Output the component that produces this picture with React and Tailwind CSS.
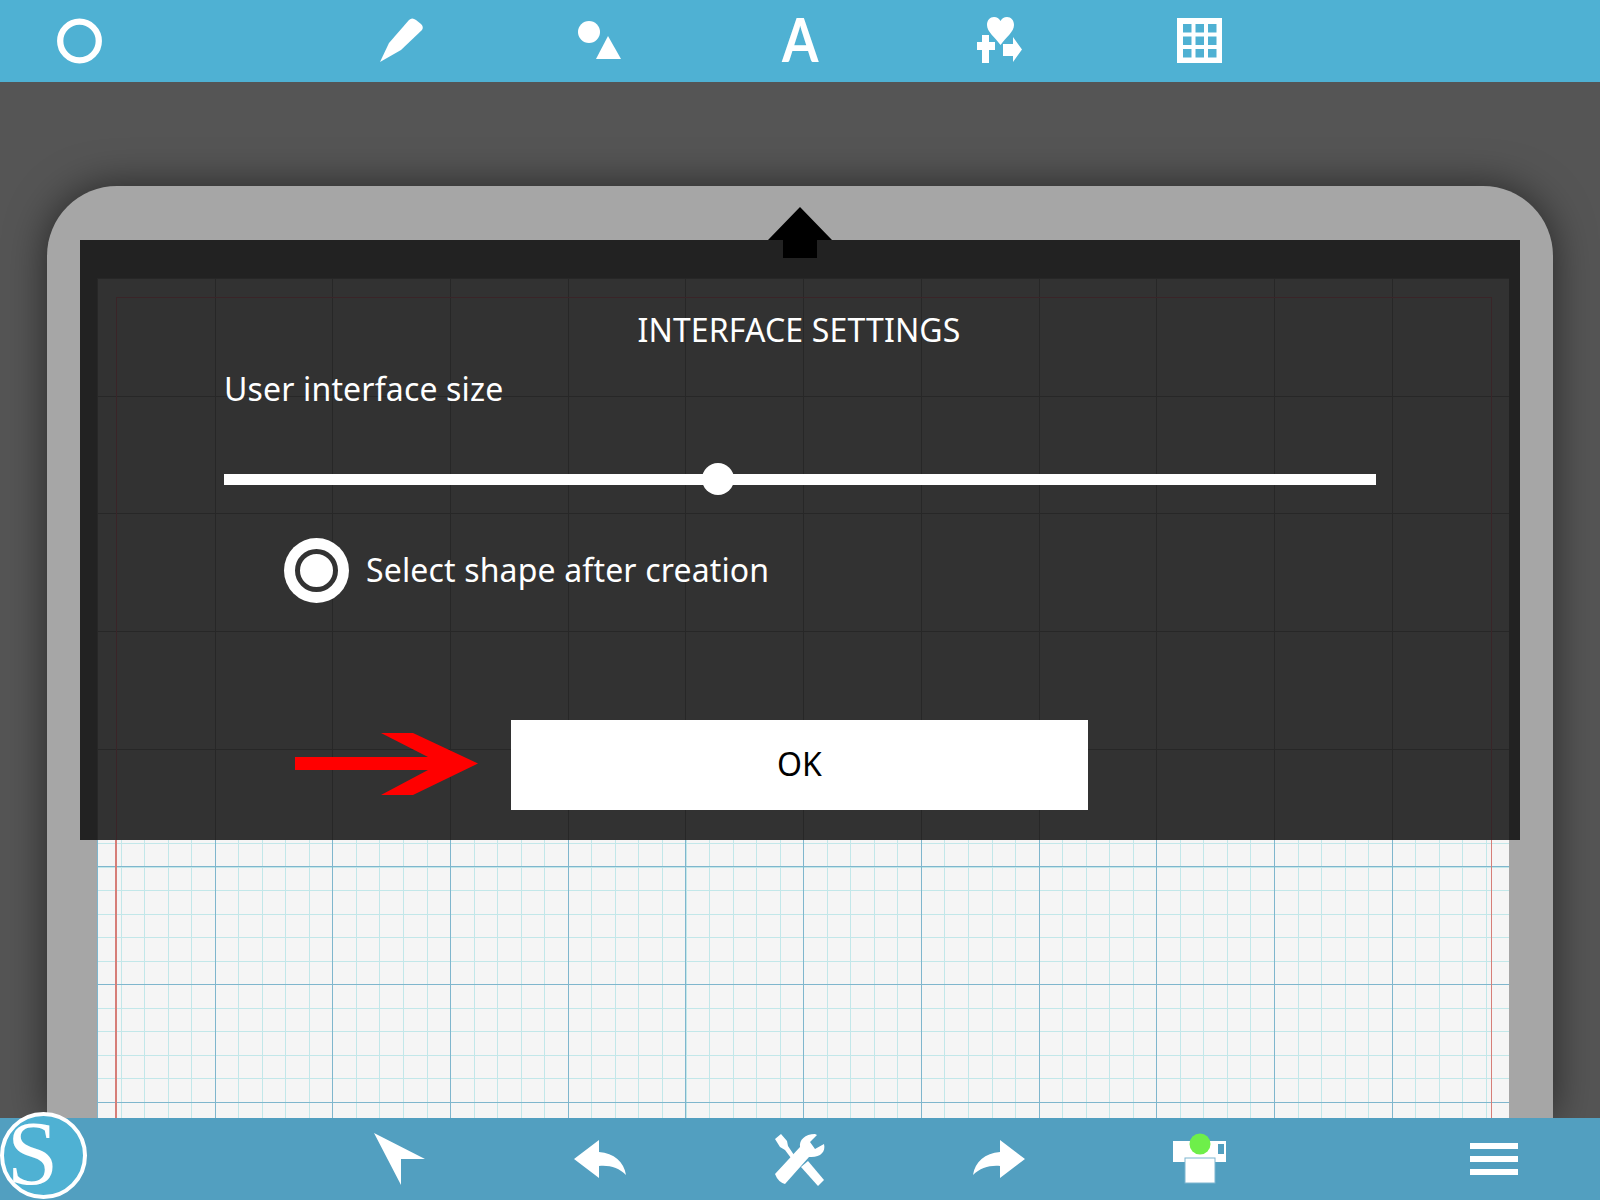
import React from 'react';

const paperGrid = 'bg-[repeating-linear-gradient(to_right,#7fb6cd_0,#7fb6cd_1px,transparent_1px,transparent_117.7px),repeating-linear-gradient(to_bottom,#7fb6cd_0,#7fb6cd_1px,transparent_1px,transparent_117.7px),repeating-linear-gradient(to_right,#c2e7e9_0,#c2e7e9_1px,transparent_1px,transparent_23.54px),repeating-linear-gradient(to_bottom,#c2e7e9_0,#c2e7e9_1px,transparent_1px,transparent_23.54px)]';
const dimGrid = 'bg-[repeating-linear-gradient(to_right,#272727_0,#272727_1px,transparent_1px,transparent_117.7px),repeating-linear-gradient(to_bottom,#272727_0,#272727_1px,transparent_1px,transparent_117.7px)]';

// viewBoxes below are in page pixels, so shapes line up with the screenshot
const TopIcon = ({ cx, children }) => (
    <svg width="60" height="60" viewBox={`${cx - 30} 11 60 60`} fill="#fff">
        {children}
    </svg>
);

const BottomIcon = ({ cx, children }) => (
    <svg width="64" height="64" viewBox={`${cx - 32} 1127 64 64`} fill="#fff">
        {children}
    </svg>
);

const Cell = ({ children }) => <div className="flex items-center justify-center">{children}</div>;

const TopBar = () => (
    <div className="relative z-10 grid h-[82px] shrink-0 grid-cols-[300px_repeat(5,200px)_300px] grid-rows-[82px] items-center bg-[#4fb1d3]">
        <div className="flex pl-[50px]">
            <TopIcon cx={80}>
                <circle cx="79.5" cy="41" r="19.3" fill="none" stroke="#fff" strokeWidth="6.3" />
            </TopIcon>
        </div>
        <Cell>
            <TopIcon cx={400}>
                <path d="M380 62 L389 43 L409 20 Q412 17 416 20 L421 24 Q424 27 422 30 L401 50 Z" />
            </TopIcon>
        </Cell>
        <Cell>
            <TopIcon cx={600}>
                <circle cx="589" cy="32" r="11" />
                <path d="M608 36 L621 59 L596 59 Z" />
            </TopIcon>
        </Cell>
        <Cell>
            <span className="mb-[5px] scale-x-[0.86] font-['Lato',sans-serif] text-[61px] leading-none font-bold text-white">A</span>
        </Cell>
        <Cell>
            <TopIcon cx={1000}>
                <path d="M1000.5 45 C995 37 987 32 987 25 C987 20 990 17 994 17 C997 17 999 18.5 1000.5 21 C1002 18.5 1004 17 1007 17 C1011 17 1014 20 1014 25 C1014 32 1006 37 1000.5 45 Z" />
                <path d="M982 35 H989 V42 H995 V50 H989 V63 H982 V50 H977 V42 H982 Z" />
                <path d="M1003 44 H1013 V37 L1022 49.5 L1013 62 V56 H1003 Z" />
            </TopIcon>
        </Cell>
        <Cell>
            <TopIcon cx={1200}>
                <path
                    fillRule="evenodd"
                    d="M1177 18 H1222 V63 H1177 Z M1183 24 V32.500 H1191.500 V24 Z M1195.500 24 V32.500 H1204 V24 Z M1208 24 V32.500 H1216.500 V24 Z M1183 36.500 V45 H1191.500 V36.500 Z M1195.500 36.500 V45 H1204 V36.500 Z M1208 36.500 V45 H1216.500 V36.500 Z M1183 49 V57.500 H1191.500 V49 Z M1195.500 49 V57.500 H1204 V49 Z M1208 49 V57.500 H1216.500 V49 Z"
                />
            </TopIcon>
        </Cell>
        <div />
    </div>
);

const BottomBar = () => (
    <div className="relative z-10 grid h-[82px] shrink-0 grid-cols-[300px_repeat(5,200px)_300px] grid-rows-[82px] items-center bg-[#529fc0]">
        <div className="mb-[1px] flex h-[87px] w-[87px] items-center justify-center self-end rounded-full border-[4px] border-white bg-[#4fb1d3] pr-[22px] pb-[6px]">
            <span className="font-['Liberation_Serif',serif] text-[92px] leading-[70px] text-white">S</span>
        </div>
        <Cell>
            <BottomIcon cx={400}>
                <path d="M374 1133 L425 1159 L401 1159 L401 1185 Z" />
            </BottomIcon>
        </Cell>
        <Cell>
            <BottomIcon cx={600}>
                <path d="M574 1159 L599 1140 V1152 C614 1153 624 1162 626 1175 C619 1168 610 1165 599 1166 V1178 Z" />
            </BottomIcon>
        </Cell>
        <Cell>
            <BottomIcon cx={800}>
                <path d="M775 1139 L781 1134 L787 1141 L788 1146 L794 1155 L791 1158 L785 1150 L780 1147 Z" />
                <path d="M801 1167 L808 1161 L824 1180 L818 1186 Z" />
                <path d="M775 1174 L800 1147 C799 1140 805 1134 815 1134 L817 1135 L810 1142 L815 1149 L824 1144 C826 1152 820 1158 809 1157 L785 1184 Q778 1182 775 1174 Z" />
            </BottomIcon>
        </Cell>
        <Cell>
            <BottomIcon cx={1000}>
                <path d="M1025 1159 L1000 1140 V1152 C985 1153 975 1162 973 1175 C980 1168 990 1165 1000 1166 V1178 Z" />
            </BottomIcon>
        </Cell>
        <Cell>
            <BottomIcon cx={1200}>
                <rect x="1173" y="1141" width="53" height="21" />
                <rect x="1185" y="1158" width="30" height="25" stroke="#7db5cf" />
                <rect x="1218" y="1144" width="6" height="10" fill="#529fc0" />
                <circle cx="1200" cy="1144" r="10.5" fill="#6eef4a" />
            </BottomIcon>
        </Cell>
        <div className="flex flex-col gap-[7px] justify-self-end pr-[82px]">
            <div className="h-[6px] w-[48px] bg-white" />
            <div className="h-[6px] w-[48px] bg-white" />
            <div className="h-[6px] w-[48px] bg-white" />
        </div>
    </div>
);

const SettingsPanel = () => (
    <div className="absolute top-[54px] right-[33px] left-[33px] flex h-[600px] bg-[#222] pt-[38px] pr-[11px] pl-[17px]">
        <svg className="absolute top-[-33px] left-[688px]" width="64" height="51" viewBox="768 207 64 51" fill="#000">
            <path d="M800 207 L832 240 H817 V258 H783 V240 H768 Z" />
        </svg>

        <div className={`relative flex flex-1 flex-col bg-[#323232] tracking-[0.15px] text-white ${dimGrid}`}>
            <div className="absolute top-[19px] right-[17px] bottom-0 left-[19px] border-x border-t border-[#3a2428]" />

            <div className="mt-[32px] h-[40px] pr-[8px] text-center text-[32px] leading-[40px]">INTERFACE SETTINGS</div>
            <div className="mt-[19px] h-[40px] pl-[127px] text-[32px] leading-[40px]">User interface size</div>

            <div className="relative mt-[54px] ml-[127px] flex h-[32px] w-[1152px] items-center">
                <div className="h-[11px] w-full bg-white" />
                <div className="absolute left-[478px] h-[32px] w-[32px] rounded-full bg-white" />
            </div>

            <div className="mt-[43px] ml-[187px] flex h-[65px] items-center gap-[17px]">
                <div className="flex h-[65px] w-[65px] items-center justify-center rounded-full bg-white">
                    <div className="h-[43px] w-[43px] rounded-full border-[5px] border-[#333] bg-white" />
                </div>
                <span className="pb-[2px] text-[32px] leading-[40px]">Select shape after creation</span>
            </div>

            <div className="mt-[117px] ml-[198px] flex items-center gap-[33px]">
                <svg className="mb-[2px]" width="183" height="62" viewBox="295 733 183 62" fill="#ff0000">
                    <path d="M295 757 H428 L381 733 H413 L478 763.5 L413 795 H381 L428 770 H295 Z" />
                </svg>
                <div className="flex h-[90px] w-[577px] items-center justify-center bg-white pb-[3px] text-[32px] text-black">OK</div>
            </div>
        </div>
    </div>
);

const App = () => {
    return (
        <div className="flex h-[1200px] w-[1600px] flex-col overflow-hidden bg-[#555] font-['Noto_Sans','Open_Sans',sans-serif]">
            <TopBar />
            <div className="flex min-h-0 flex-1 px-[47px] pt-[104px]">
                <div className="relative flex flex-1 rounded-t-[70px] bg-[#a6a6a6] pt-[92px] pr-[44px] pl-[50px] shadow-[0_0_40px_rgba(0,0,0,0.55)]">
                    <div className={`relative flex-1 overflow-hidden bg-[#f5f5f5] ${paperGrid}`}>
                        <div className="absolute top-[19px] right-[17px] bottom-[-10px] left-[18px] border border-l-2 border-[#d67e78]" />
                    </div>
                    <SettingsPanel />
                </div>
            </div>
            <BottomBar />
        </div>
    );
};

export default App;
